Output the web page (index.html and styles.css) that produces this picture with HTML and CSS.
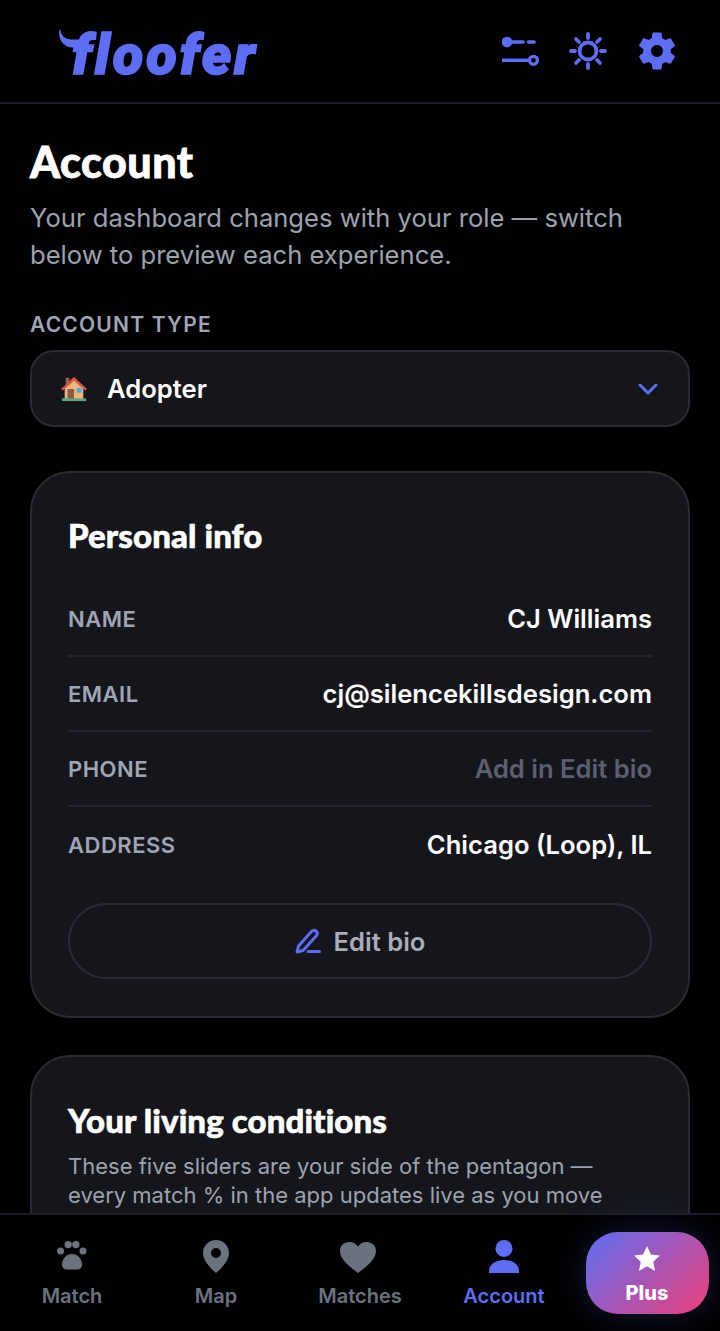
FILE: index.html
```html
<!DOCTYPE html>
<html lang="en">
<head>
  <meta charset="UTF-8" />
  <meta name="viewport" content="width=device-width, initial-scale=1.0"/>
  <title>Floofer - Account</title>
  <link rel="stylesheet" href="styles.css">
</head>
<body>
  <div class="app">
    <header class="topbar">
      <div class="logo">
        <svg class="logo-tail" width="24" height="26" viewBox="0 0 24 26"><path d="M1 1c.5 5 4 8.500 8 9.500 3 .7 6 .5 13 .5v7H13C5 18-1 10 1 1z" fill="#5d6ef5" stroke="#5d6ef5" stroke-width="1" stroke-linejoin="round"/></svg>
        <span>floofer</span>
      </div>
      <div class="top-icons">
        <svg width="40" height="36" viewBox="2 -2 40 36" fill="none" stroke="#5d6ef5" stroke-width="3.6" stroke-linecap="round">
          <circle cx="7" cy="7" r="5.300" fill="#5d6ef5" stroke="none"/>
          <path d="M8 7h15M28.500 7h5.500M3 25.300h25"/>
          <circle cx="33.500" cy="25.300" r="4" stroke-width="3.200"/>
        </svg>
        <svg width="40" height="40" viewBox="0 0 40 40" fill="none" stroke="#5d6ef5" stroke-width="3.800" stroke-linecap="round">
          <circle cx="20" cy="20" r="8.500"/>
          <path d="M20 3v4M20 33v4M3 20h4M33 20h4M8 8l3 3M29 29l3 3M8 32l3-3M29 11l3-3"/>
        </svg>
        <svg width="46" height="46" viewBox="0 0 24 24" fill="#5d6ef5"><path d="M19.14 12.94c.04-.3.06-.61.06-.94 0-.32-.02-.64-.07-.94l2.03-1.58c.18-.14.23-.41.12-.61l-1.92-3.32c-.12-.22-.37-.29-.59-.22l-2.39.96c-.5-.38-1.03-.7-1.62-.94l-.36-2.54c-.04-.24-.24-.41-.48-.41h-3.84c-.24 0-.43.17-.47.41l-.36 2.54c-.59.24-1.13.57-1.62.94l-2.39-.96c-.22-.08-.47 0-.59.22L2.740 8.870c-.12.21-.08.47.12.61l2.030 1.580c-.05.3-.09.63-.09.94s.02.64.07.94l-2.030 1.580c-.18.14-.23.41-.12.61l1.920 3.320c.12.22.37.29.59.22l2.390-.96c.5.38 1.030.7 1.620.94l.36 2.540c.05.24.24.41.48.41h3.840c.24 0 .44-.17.47-.41l.36-2.540c.59-.24 1.130-.56 1.620-.94l2.390.96c.22.08.47 0 .59-.22l1.920-3.320c.12-.22.07-.47-.12-.61l-2.010-1.580zM12 15.100c-1.710 0-3.100-1.390-3.100-3.100s1.390-3.100 3.100-3.100 3.100 1.390 3.100 3.100-1.390 3.100-3.100 3.100z"/></svg>
      </div>
    </header>

    <main class="content">
      <h1 class="page-title">Account</h1>
      <p class="page-sub">Your dashboard changes with your role — switch below to preview each experience.</p>

      <div class="field-label">ACCOUNT TYPE</div>
      <div class="select">
        <svg width="28" height="26" viewBox="0 0 30 28">
          <rect x="6" y="2" width="4" height="8" fill="#a1624a"/>
          <path d="M5 12L15 3l10 9v13H5z" fill="#eeb67e"/>
          <path d="M1 14L15 1l14 13-2 1.500L15 5 3 15.500z" fill="#d9583f"/>
          <rect x="8" y="14" width="7" height="11" fill="#8a5a44"/>
          <rect x="18" y="13" width="5" height="5" fill="#42ade2"/>
          <rect x="2" y="24" width="26" height="3" fill="#5fa777"/>
        </svg>
        <span class="select-text">Adopter</span>
        <svg width="20" height="12" viewBox="0 0 20 12" fill="none" stroke="#5d6ef5" stroke-width="3" stroke-linecap="round" stroke-linejoin="round"><path d="M2 2l8 8 8-8"/></svg>
      </div>

      <section class="card">
        <h2 class="card-title">Personal info</h2>
        <div class="rows">
          <div class="row"><span class="row-label">NAME</span><span class="row-value">CJ Williams</span></div>
          <div class="row"><span class="row-label">EMAIL</span><span class="row-value">cj@silencekillsdesign.com</span></div>
          <div class="row"><span class="row-label">PHONE</span><span class="row-value muted">Add in Edit bio</span></div>
          <div class="row last"><span class="row-label">ADDRESS</span><span class="row-value">Chicago (Loop), IL</span></div>
        </div>
        <div class="edit-btn">
          <svg width="26" height="26" viewBox="0 0 26 26" fill="none" stroke="#5d6ef5" stroke-width="3" stroke-linecap="round" stroke-linejoin="round"><path d="M2 24l1.500-6L16.500 3.500c1.500-1.500 3.500-1.500 4.800-.2s1.300 3.200-.2 4.700L8 22.500z"/><path d="M13 23.500h11.500"/></svg>
          <span>Edit bio</span>
        </div>
      </section>

      <section class="card card-tall">
        <h2 class="card-title">Your living conditions</h2>
        <p class="card-text">These five sliders are your side of the pentagon — every match % in the app updates live as you move</p>
      </section>
    </main>

    <nav class="tabbar">
      <div class="tab">
        <svg width="30" height="33" viewBox="0 0 30 33" fill="#6b7280"><circle cx="3.500" cy="11" r="3.500"/><circle cx="26" cy="11" r="3.500"/><circle cx="11.200" cy="4.600" r="3.700"/><circle cx="18.800" cy="4.600" r="3.700"/><path d="M15 14c5.500 0 10 5 10 10.500 0 3-2 5-5 5H10c-3 0-5-2-5-5C5 19 9.500 14 15 14z"/></svg>
        <span>Match</span>
      </div>
      <div class="tab">
        <svg width="26" height="33" viewBox="0 0 26 33"><path fill-rule="evenodd" d="M13 0C5.800 0 0 5.800 0 13c0 7 6.500 14.500 13 20 6.500-5.500 13-13 13-20C26 5.800 20.200 0 13 0zm0 8a5 5 0 110 10 5 5 0 010-10z" fill="#6b7280"/></svg>
        <span>Map</span>
      </div>
      <div class="tab">
        <svg width="40" height="33" viewBox="0 0 40 33"><path d="M18 33C9.500 26.500 0 19.500 0 11 0 5.500 4 2 9.500 2c3.500 0 6.500 1.800 8.500 4.500C20 3.800 23 2 26.500 2 32 2 36 5.500 36 11c0 8.500-9.500 15.500-18 22z" fill="#6b7280"/></svg>
        <span>Matches</span>
      </div>
      <div class="tab active">
        <svg width="30" height="33" viewBox="0 0 30 33" fill="#5d6ef5"><circle cx="15" cy="8.500" r="8.500"/><path d="M0 33v-2c0-6 6-11 15-11s15 5 15 11v2z"/></svg>
        <span>Account</span>
      </div>
      <div class="tab">
        <div class="plus">
          <svg width="26" height="26" viewBox="0 0 26 26"><path d="M13 0l3.900 8.500 9.100 1-6.800 6.200 1.900 9.300L13 20.300 4.900 25l1.900-9.300L0 9.500l9.100-1z" fill="#fff"/></svg>
          <span>Plus</span>
        </div>
      </div>
    </nav>
  </div>
</body>
</html>
```

FILE: styles.css
```css
* {
  box-sizing: border-box;
}
body {
  margin: 0;
  background-color: #000;
  font-family: Inter, "Liberation Sans", sans-serif;
  color: #fff;
}
.app {
  height: 1331px;
  display: flex;
  flex-direction: column;
  overflow: hidden;
}
.topbar {
  height: 104px;
  flex-shrink: 0;
  display: flex;
  align-items: center;
  justify-content: space-between;
  padding: 0 40px 0 60px;
  border-bottom: 2px solid #1b1c26;
}
.logo {
  position: relative;
  top: 4px;
  font-family: Roboto, sans-serif;
  font-style: italic;
  font-weight: 900;
  font-size: 56px;
  line-height: 1;
  letter-spacing: 3px;
  color: #5d6ef5;
  -webkit-text-stroke: 1.6px #5d6ef5;
  padding-left: 12px;
}
.logo-tail {
  position: absolute;
  left: -1px;
  top: 2px;
}
.top-icons {
  display: flex;
  align-items: center;
  gap: 26px;
}
.content {
  flex: 1;
  min-height: 0;
  overflow: hidden;
  padding: 34px 30px 0;
}
.page-title {
  margin: 0;
  font-family: Lato, sans-serif;
  font-weight: 900;
  font-size: 43px;
  line-height: 48px;
  letter-spacing: 0.5px;
  -webkit-text-stroke: 0.8px #fff;
  font-variant-ligatures: none;
}
.page-sub {
  margin: 13px 0 0;
  font-size: 25.6px;
  line-height: 37px;
  color: #9ca3af;
}
.field-label {
  margin-top: 38px;
  font-size: 21px;
  line-height: 28px;
  font-weight: 600;
  letter-spacing: 1.2px;
  color: #9fa5b5;
}
.select {
  margin-top: 11px;
  height: 77px;
  display: flex;
  align-items: center;
  padding: 0 30px 0 28px;
  background-color: #15161c;
  border: 2px solid #2a2b35;
  border-radius: 24px;
}
.select-text {
  margin-left: 19px;
  flex: 1;
  font-size: 25.6px;
  font-weight: 600;
}
.card {
  margin-top: 44px;
  padding: 42px 36px 37px;
  background-color: #15161c;
  border: 2px solid #2a2b35;
  border-radius: 40px;
}
.card-tall {
  margin-top: 37px;
  padding-top: 43px;
  min-height: 300px;
}
.card-title {
  margin: 0;
  font-family: Lato, sans-serif;
  font-weight: 900;
  font-size: 33px;
  line-height: 40px;
  letter-spacing: 0.1px;
  -webkit-text-stroke: 0.6px #fff;
  font-variant-ligatures: none;
}
.rows {
  margin-top: 27px;
}
.row {
  height: 75px;
  display: flex;
  align-items: center;
  justify-content: space-between;
  border-bottom: 2px solid #22232c;
}
.row.last {
  border-bottom: none;
}
.row-label {
  font-size: 22px;
  font-weight: 600;
  letter-spacing: 0.5px;
  color: #9fa5b5;
}
.row-value {
  font-size: 25.6px;
  font-weight: 600;
}
.muted {
  color: #5b6070;
}
.edit-btn {
  margin-top: 21px;
  height: 76px;
  display: flex;
  align-items: center;
  justify-content: center;
  gap: 13px;
  border: 2px solid #2a2b35;
  border-radius: 38px;
  font-size: 25.6px;
  font-weight: 600;
  color: #a9adba;
}
.card-text {
  margin: 12px 0 0;
  font-size: 22px;
  line-height: 29px;
  color: #9ca3af;
}
.tabbar {
  height: 118px;
  flex-shrink: 0;
  display: flex;
  background-color: #000;
  border-top: 2px solid #1b1c26;
}
.tab {
  width: 144px;
  display: flex;
  flex-direction: column;
  align-items: center;
  padding-top: 25px;
  gap: 10px;
  font-size: 20px;
  font-weight: 600;
  line-height: 26px;
  color: #6b7280;
}
.tab svg {
  flex-shrink: 0;
}
.tab.active {
  color: #5d6ef5;
}
.plus {
  width: 123px;
  height: 82px;
  margin-top: -8px;
  margin-left: -2px;
  padding-top: 14px;
  display: flex;
  flex-direction: column;
  align-items: center;
  gap: 8px;
  border-radius: 32px;
  background: linear-gradient(135deg, #5d6ef5, #ee3f79);
  box-shadow: 0 0 40px rgba(93, 110, 245, 0.22);
  color: #fff;
  font-weight: 800;
}
```
